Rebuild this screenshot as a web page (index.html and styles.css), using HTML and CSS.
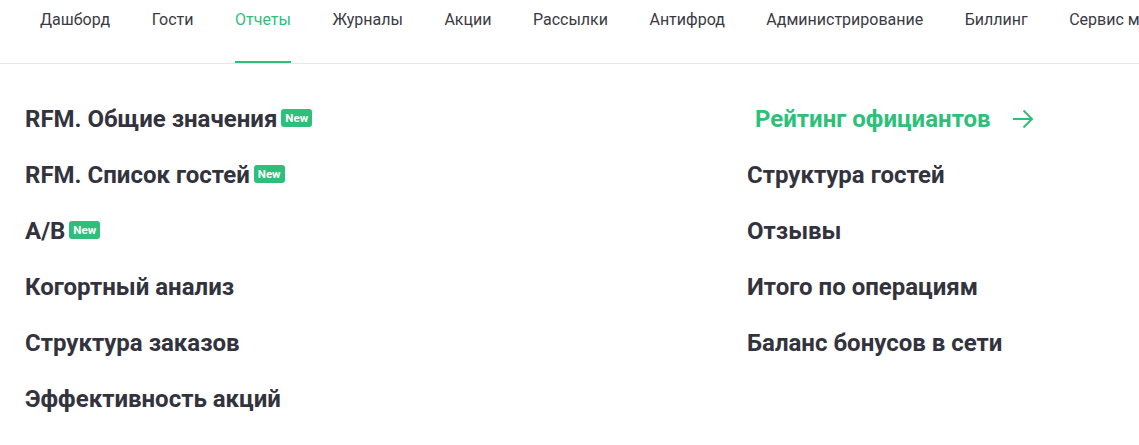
FILE: index.html
```html
<!DOCTYPE html>
<html lang="ru">
<head>
<meta charset="utf-8">
<link rel="stylesheet" href="styles.css">
</head>
<body>
<nav class="nav">
  <a class="nav-item">Дашборд</a>
  <a class="nav-item">Гости</a>
  <a class="nav-item active">Отчеты</a>
  <a class="nav-item">Журналы</a>
  <a class="nav-item">Акции</a>
  <a class="nav-item">Рассылки</a>
  <a class="nav-item">Антифрод</a>
  <a class="nav-item">Администрирование</a>
  <a class="nav-item">Биллинг</a>
  <a class="nav-item">Сервис мониторинга</a>
</nav>
<main class="menu">
  <ul class="col">
    <li class="link">RFM. Общие значения<span class="badge">New</span></li>
    <li class="link">RFM. Список гостей<span class="badge">New</span></li>
    <li class="link">A/B<span class="badge">New</span></li>
    <li class="link">Когортный анализ</li>
    <li class="link">Структура заказов</li>
    <li class="link">Эффективность акций</li>
  </ul>
  <ul class="col col-right">
    <li class="link hover">Рейтинг официантов<svg class="arrow" width="22" height="20" viewBox="0 0 22 20"><path d="M1 10H20M11.5 1.5L20 10L11.5 18.5" fill="none" stroke="#2ebf7a" stroke-width="2"/></svg></li>
    <li class="link">Структура гостей</li>
    <li class="link">Отзывы</li>
    <li class="link">Итого по операциям</li>
    <li class="link">Баланс бонусов в сети</li>
  </ul>
</main>
</body>
</html>
```
FILE: styles.css
```css
* { box-sizing: border-box; }
html, body { margin: 0; padding: 0; background: #fff; overflow: hidden; }
body { font-family: Roboto, "Liberation Sans", sans-serif; color: #33333d; width: 1139px; height: 445px; }
.nav {
  display: flex;
  gap: 41.5px;
  padding-left: 40px;
  height: 64px;
  border-bottom: 1px solid #e6e6e6;
  white-space: nowrap;
  overflow: hidden;
}
.nav-item {
  font-size: 16px;
  line-height: 20px;
  padding-top: 10px;
  height: 63px;
  color: #3a3a44;
  border-bottom: 2px solid transparent;
  flex-shrink: 0;
}
.nav-item.active { color: #2ebf7a; border-bottom-color: #2ebf7a; }
.menu {
  display: flex;
  padding: 41px 0 0 25px;
}
.col { list-style: none; margin: 0; padding: 0; display: flex; flex-direction: column; gap: 28px; }
.col-right { margin-left: auto; width: 392px; }
.link {
  font-size: 24px;
  font-weight: 700;
  line-height: 28px;
  display: flex;
  align-items: center;
  white-space: nowrap;
}
.hover { color: #2ebf7a; padding-left: 8px; }
.arrow { margin-left: 21px; }
.badge {
  display: inline-block;
  background: #2ebf7a;
  color: #fff;
  font-size: 11.5px;
  font-weight: 700;
  line-height: 18px;
  height: 18px;
  padding: 0 4px;
  border-radius: 3px;
  margin-left: 4px;
  position: relative;
  top: -1px;
}
```
